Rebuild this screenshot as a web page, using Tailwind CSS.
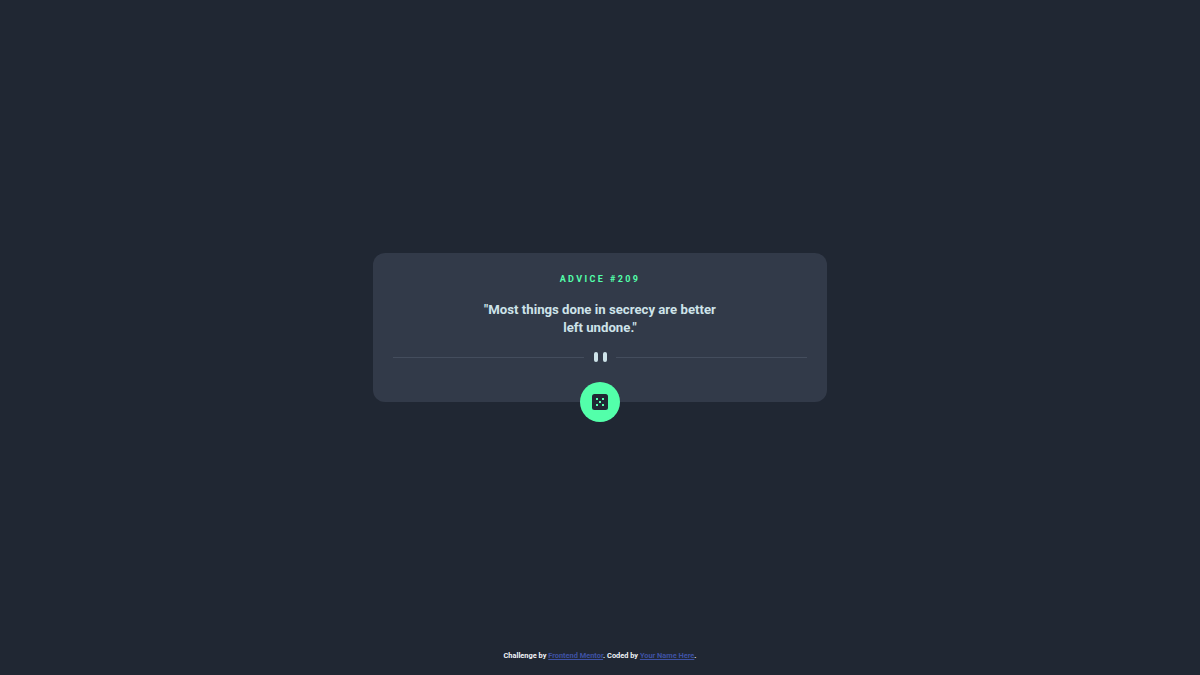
<!doctype html>
<html lang="en">
  <head>
    <meta charset="UTF-8" />
    <meta name="viewport" content="width=device-width, initial-scale=1.0" />
    <title>Advice generator</title>
    <script src="https://cdn.jsdelivr.net/npm/@tailwindcss/browser@4"></script>
  </head>
  <body class="min-h-screen bg-[#202733] font-['Roboto',sans-serif] flex flex-col">
    <main class="flex-1 flex items-center justify-center pt-[20px]">
      <div class="relative w-[454px] h-[149px] bg-[#323a49] rounded-xl flex flex-col items-center pt-[20px]">
        <h1 class="text-[9px] leading-[12px] font-bold tracking-[2.4px] text-[#53ffaa]">ADVICE #209</h1>
        <p class="mt-[16px] w-[240px] text-center text-[13.2px] leading-[18px] font-bold text-[#cee3e9]">"Most things done in secrecy are better left undone."</p>
        <div class="mt-[15px] w-[414px] flex items-center justify-between">
          <div class="w-[191px] h-px bg-[#444d5d]"></div>
          <div class="flex gap-[5px]">
            <span class="w-[4px] h-[10px] rounded-[2px] bg-[#cee3e9]"></span>
            <span class="w-[4px] h-[10px] rounded-[2px] bg-[#cee3e9]"></span>
          </div>
          <div class="w-[191px] h-px bg-[#444d5d]"></div>
        </div>
        <button class="absolute left-1/2 -translate-x-1/2 -bottom-[20px] w-[40px] h-[40px] rounded-full bg-[#53ffaa] flex items-center justify-center">
          <svg class="w-[16px] h-[16px]" viewBox="0 0 16 16" xmlns="http://www.w3.org/2000/svg">
            <rect width="16" height="16" rx="2.5" fill="#202733" />
            <g fill="#53ffaa">
              <rect x="4" y="4" width="2" height="2" />
              <rect x="10" y="4" width="2" height="2" />
              <rect x="7" y="7" width="2" height="2" />
              <rect x="4" y="10" width="2" height="2" />
              <rect x="10" y="10" width="2" height="2" />
            </g>
          </svg>
        </button>
      </div>
    </main>
    <footer class="h-[40px] text-center text-[7.4px] leading-[12px] font-bold text-[#f0f4f8] pt-[15px]">
      Challenge by <a href="#" class="text-[#3e52a3] underline">Frontend Mentor</a>. Coded by <a href="#" class="text-[#3e52a3] underline">Your Name Here</a>.
    </footer>
  </body>
</html>
